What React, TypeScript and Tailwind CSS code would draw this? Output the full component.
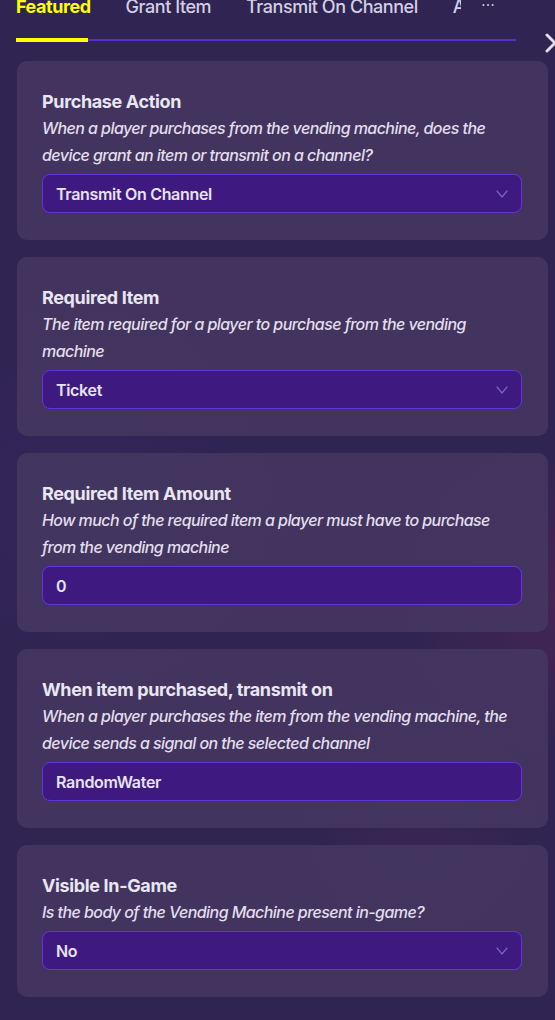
import React from "react";

type Field = {
  title: string;
  desc: string;
  value: string;
  select: boolean;
};

const fields: Field[] = [
  {
    title: "Purchase Action",
    desc: "When a player purchases from the vending machine, does the device grant an item or transmit on a channel?",
    value: "Transmit On Channel",
    select: true,
  },
  {
    title: "Required Item",
    desc: "The item required for a player to purchase from the vending machine",
    value: "Ticket",
    select: true,
  },
  {
    title: "Required Item Amount",
    desc: "How much of the required item a player must have to purchase from the vending machine",
    value: "0",
    select: false,
  },
  {
    title: "When item purchased, transmit on",
    desc: "When a player purchases the item from the vending machine, the device sends a signal on the selected channel",
    value: "RandomWater",
    select: false,
  },
  {
    title: "Visible In-Game",
    desc: "Is the body of the Vending Machine present in-game?",
    value: "No",
    select: true,
  },
];

function Chevron() {
  return (
    <svg width="12" height="8" viewBox="0 0 12 8" fill="none" className="mr-[-1px]">
      <path d="M1 1 L6 7 L11 1" stroke="#7d62bf" strokeWidth="1.2" strokeLinecap="round" strokeLinejoin="round" />
    </svg>
  );
}

function Card({ f }: { f: Field }) {
  return (
    <div className="rounded-[10px] bg-[#433660]/95 pt-[28px] pb-[27px] pl-[25px] pr-[26px]">
      <div className="text-[18px] font-bold leading-[25px] tracking-[-0.02em] text-[#e9e6f1]">{f.title}</div>
      <div className="pt-[1px] text-[16px] font-medium italic leading-[27px] tracking-[-0.035em] text-[#e2deec]">{f.desc}</div>
      <div className="mt-[5px] flex h-[39px] items-center justify-between rounded-[8px] border border-[#6533dc] bg-[#3e1a80] pl-[13px] pr-[14px]">
        <span className="text-[16px] font-semibold tracking-[-0.02em] text-[#e6e2f0]">{f.value}</span>
        {f.select ? <Chevron /> : null}
      </div>
    </div>
  );
}

export default function App() {
  return (
    <div
      className="relative h-[1020px] w-[555px] overflow-hidden bg-[#2f2452] bg-[radial-gradient(circle_at_560px_600px,rgba(110,40,90,0.35),transparent_160px),radial-gradient(circle_at_420px_820px,rgba(90,40,100,0.25),transparent_120px),radial-gradient(circle_at_80px_500px,rgba(70,40,110,0.25),transparent_200px)]"
      style={{ fontFamily: "Inter, 'Noto Sans', sans-serif" }}
    >
      <div className="h-[61px] pl-[16px]">
        <div className="flex h-[18px] items-start">
          <div className="mt-[-4px] flex w-[445px] gap-[35px] overflow-hidden whitespace-nowrap text-[18px] leading-[22px] tracking-[-0.025em]">
            <span className="font-bold text-[#ffff00]">Featured</span>
            <span className="font-medium text-[#d4d0e2]">Grant Item</span>
            <span className="font-medium text-[#d4d0e2]">Transmit On Channel</span>
            <span className="font-medium text-[#d4d0e2]">Activation</span>
          </div>
          <span className="ml-[20px] mt-[-5px] text-[14px] leading-[20px] text-[#cfcbe0]">⋯</span>
        </div>
        <div className="relative mt-[21px] h-[2px] w-[500px] bg-[#5330cc]">
          <div className="absolute left-0 top-[-1px] h-[4px] w-[72px] bg-[#ffff00]" />
        </div>
      </div>
      <svg className="absolute left-[545px] top-[33px]" width="20" height="20" viewBox="0 0 20 20">
        <path d="M2 2 L18 18 M18 2 L2 18" stroke="#e2deec" strokeWidth="3" strokeLinecap="round" />
      </svg>
      <div className="flex flex-col gap-[17px] pl-[17px] pr-[7px]">
        {fields.map((f) => (
          <Card key={f.title} f={f} />
        ))}
      </div>
    </div>
  );
}
